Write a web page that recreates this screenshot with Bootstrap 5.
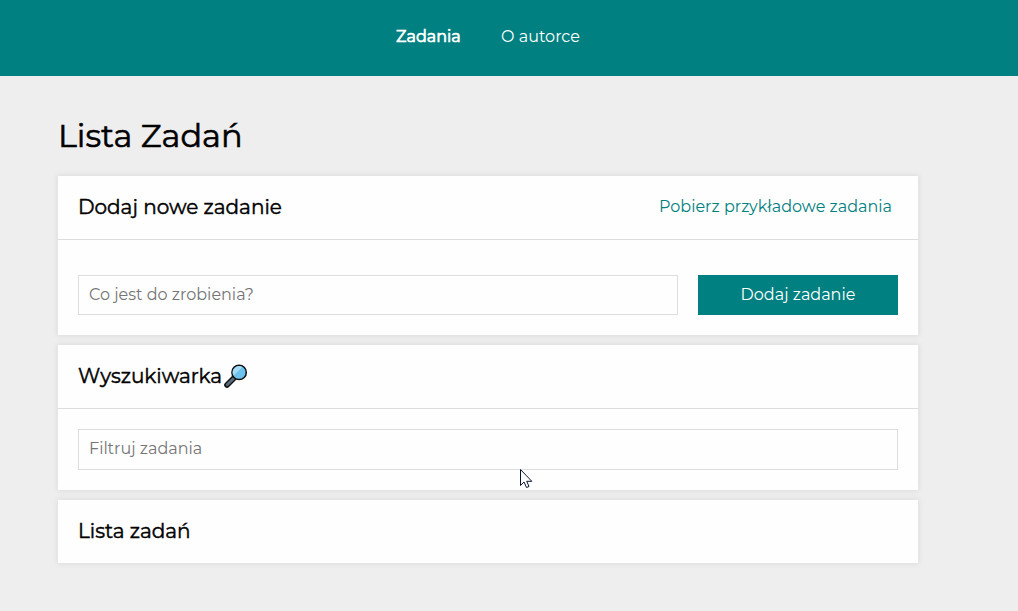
<!DOCTYPE html>
<html lang="pl">
<head>
<meta charset="utf-8">
<meta name="viewport" content="width=device-width, initial-scale=1">
<title>Lista Zadań</title>
<link href="https://cdn.jsdelivr.net/npm/bootstrap@5.3.0/dist/css/bootstrap.min.css" rel="stylesheet">
<style>
body { font-family: Montserrat, Inter, sans-serif; font-size: 16px; line-height: 20px; background: #eee; color: #000; min-height: 100vh; }
.topbar { background: teal; height: 76px; padding: 27px 42px 0 0; gap: 40px; }
.topbar .nav-link { color: #fff; padding: 0; line-height: 20px; white-space: nowrap; }
.topbar .active { -webkit-text-stroke: .7px #fff; width: 65px; }
.page { width: 860px; margin-left: 58px; }
h1 { font-size: 32px; font-weight: 400; line-height: 40px; margin: 40px 0 20px; -webkit-text-stroke: .6px #000; }
.panel { background: #fefefe; box-shadow: 0 0 5px 1px #ddd; margin-bottom: 10px; }
.panel-head { height: 63px; padding: 0 26px 2px 20px; }
.panel-head.ruled { height: 64px; border-bottom: 1px solid #ddd; }
h2 { font-size: 20px; font-weight: 400; line-height: 24px; margin: 0; -webkit-text-stroke: .45px #000; }
.link-btn { color: teal; background: none; border: 0; padding: 0; line-height: 20px; }
.field { border: 1px solid #ddd; border-radius: 0; padding: 0 10px 2px; height: 40px; font-size: 16px; background: #fefefe; }
.field.tall { height: 41px; }
.field::placeholder { color: #757575; opacity: 1; }
.add { background: teal; color: #fff; border: 0; width: 200px; height: 40px; padding: 0; flex: none; }
.add-form { padding: 35px 20px 20px; gap: 20px; }
.search-body { padding: 20px; }
.cursor { left: 519px; top: 468px; }
</style>
</head>
<body>
<nav class="topbar nav d-flex justify-content-center align-items-start">
  <a class="nav-link active" href="#">Zadania</a>
  <a class="nav-link" href="#">O autorce</a>
</nav>
<main class="page">
  <h1>Lista Zadań</h1>
  <section class="panel">
    <div class="panel-head ruled d-flex justify-content-between align-items-center">
      <h2>Dodaj nowe zadanie</h2>
      <button class="link-btn">Pobierz przykładowe zadania</button>
    </div>
    <form class="add-form d-flex">
      <input class="field form-control" placeholder="Co jest do zrobienia?">
      <button type="button" class="add">Dodaj zadanie</button>
    </form>
  </section>
  <section class="panel">
    <div class="panel-head ruled d-flex align-items-center">
      <h2>Wyszukiwarka</h2>
      <svg class="ms-0" width="26" height="26" viewBox="-1 0 26 26"><path d="M4 22 11 15" stroke="#111" stroke-width="5.6" stroke-linecap="round"/><path d="M4.2 21.8 10.6 15.4" stroke="#566b7b" stroke-width="2.8" stroke-linecap="round"/><circle cx="16.1" cy="9.4" r="7.2" fill="#6cc4ee" stroke="#111" stroke-width="1.5"/><path d="M10.6 12.6A6.3 6.3 0 0 1 19.4 4.1Z" fill="#a5dbf7"/></svg>
    </div>
    <div class="search-body">
      <input class="field tall form-control" placeholder="Filtruj zadania">
    </div>
  </section>
  <section class="panel">
    <div class="panel-head d-flex align-items-center"><h2>Lista zadań</h2></div>
  </section>
</main>
<svg class="cursor position-absolute" width="14" height="21" viewBox="0 0 14 21"><path d="M1.5 1.5V17.5L5 14 7.5 19.5 10 18.5 7.7 13.3H12.8Z" fill="#fff" stroke="#0a1530" stroke-width="1"/></svg>
</body>
</html>
